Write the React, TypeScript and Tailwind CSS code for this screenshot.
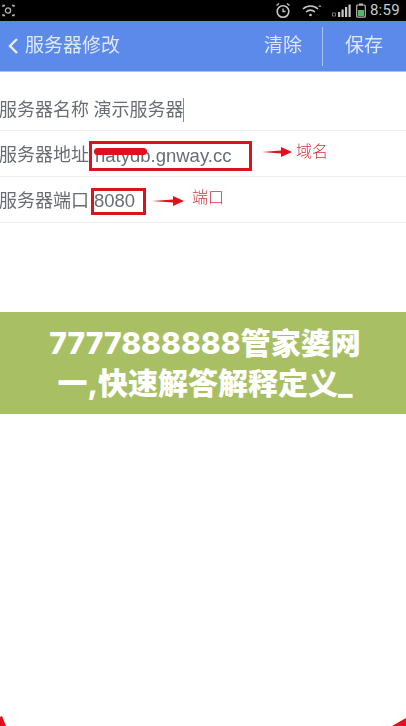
const cjk = "font-['Roboto','Noto_Sans_CJK_SC',sans-serif]";

const RedArrow = ({ width }: { width: number }) => (
  <svg width={width} height="14" viewBox={`0 0 ${width} 14`} className="shrink-0">
    <path d={`M0 7 L${width - 11} 5.5 L${width - 11} 2 L${width} 7 L${width - 11} 12 L${width - 11} 8.5 Z`} fill="#e2101c" />
  </svg>
);

const StatusBar = () => (
  <div className="h-[21px] bg-black flex items-center pl-[2px] pr-[6px] text-[#c9cdd0]">
    <svg width="13" height="13" viewBox="0 0 13 13" fill="none" stroke="#b5b5b5" strokeWidth="1.3">
      <path d="M1 3V1.5H3M10 1.5H12V3M1 10V11.5H3M10 11.5H12V10" />
      <circle cx="6" cy="6.5" r="2.6" />
    </svg>
    <div className="flex-1" />
    <svg width="16" height="17" viewBox="0 0 16 17" fill="none" stroke="#c8c8c8" strokeWidth="1.6">
      <circle cx="8" cy="9.5" r="5.8" />
      <path d="M8 6.5V9.5H10.5M1.5 3.5L4 1.5M14.5 3.5L12 1.5" strokeWidth="1.3" />
    </svg>
    <svg width="20" height="14" viewBox="0 0 20 14" fill="none" stroke="#c8c8c8" strokeWidth="1.5" className="ml-[11px]">
      <path d="M1 5C5 1 12 1 16 5M4 8C7 5.5 10 5.5 13 8" />
      <circle cx="8.5" cy="11" r="1.3" fill="#c8c8c8" stroke="none" />
      <path d="M16 3L18 0.5L19.5 3Z" fill="#5d9e4e" stroke="none" />
    </svg>
    <svg width="20" height="14" viewBox="0 0 20 14" className="ml-[10px]">
      <rect x="0.5" y="9" width="3" height="3" fill="none" stroke="#8a8a8a" strokeWidth="0.8" />
      <rect x="6" y="8" width="2.2" height="5" fill="#c8c8c8" />
      <rect x="9.5" y="5.5" width="2.2" height="7.5" fill="#c8c8c8" />
      <rect x="13" y="3" width="2.2" height="10" fill="#c8c8c8" />
      <rect x="16.5" y="0.5" width="2.2" height="12.5" fill="#c8c8c8" />
    </svg>
    <svg width="10" height="15" viewBox="0 0 10 15" className="ml-[4px]">
      <rect x="3" y="0.5" width="4" height="2" fill="#b8b8b8" />
      <rect x="0.7" y="2" width="8.6" height="12.2" rx="1" fill="none" stroke="#b8b8b8" strokeWidth="1.2" />
      <rect x="2" y="7" width="6" height="6" fill="#56b96a" />
    </svg>
    <span className="ml-[4px] text-[15px] leading-none font-['Roboto',sans-serif] tracking-[0.3px]">8:59</span>
  </div>
);

const Header = () => (
  <div className="h-[51px] bg-[#5b8aeb] border-b border-[#a9c4f3] flex items-center text-[#dfe8fa] text-[19px]">
    <svg width="14" height="18" viewBox="0 0 14 18" fill="none" stroke="#e8effc" strokeWidth="2.4" className="ml-[6px]">
      <path d="M11 2L4 9L11 16" />
    </svg>
    <span className="ml-[5px] whitespace-nowrap">服务器修改</span>
    <div className="flex-1" />
    <span>清除</span>
    <div className="ml-[20px] w-px h-[39px] bg-[#a9c4f3]" />
    <span className="ml-[22px] mr-[23px]">保存</span>
  </div>
);

const App = () => {
  return (
    <div className={`${cjk} relative w-[406px] h-[726px] bg-white overflow-hidden`}>
      <div className="blur-[0.4px]">
        <StatusBar />
        <Header />

        <div className="text-[#686d74] text-[18px] leading-none">
          <div className="h-[59px] border-b border-[#eeeeee] flex items-center pt-[18px]">
            <span className="ml-[-1px] whitespace-nowrap">服务器名称 演示服务器</span>
            <span className="w-px h-[24px] bg-[#8a8a8a]" />
          </div>

          <div className="h-[46px] border-b border-[#eeeeee] flex items-center">
            <span className="ml-[-1px] pt-[3px] whitespace-nowrap">服务器地址</span>
            <div className="relative ml-0 mt-[4px] w-[163px] h-[30px] border-[3px] border-[#d9141e] flex items-center pl-[3px] pt-[1px] text-[18.5px] font-['Liberation_Sans',sans-serif] shrink-0">
              <span>natydb.gnway.cc</span>
              <div className="absolute left-[2px] top-[4px] w-[53px] h-[7px] rounded-full bg-[#e2101c]" />
            </div>
            <div className="ml-[10px] mt-[-3px]">
              <RedArrow width={30} />
            </div>
            <span className="ml-[4px] mt-[-3px] text-[16px] text-[#c9383e] font-light">域名</span>
          </div>

          <div className="h-[46px] border-b border-[#eeeeee] flex items-center">
            <span className="ml-[-1px] pt-[3px] whitespace-nowrap">服务器端口</span>
            <div className="ml-[2px] mt-[3px] w-[55px] h-[27px] border-[3px] border-[#d9141e] flex items-center pl-[0px] pt-[1px] text-[18.5px] font-['Liberation_Sans',sans-serif] shrink-0">
              8080
            </div>
            <div className="ml-[6px] mt-[3px]">
              <RedArrow width={32} />
            </div>
            <span className="ml-[8px] mt-[-3px] text-[16px] text-[#c9383e] font-light">端口</span>
          </div>
        </div>
      </div>

      <div className="mt-[89px] h-[102px] bg-[#a9bf63] flex items-center justify-center text-center text-white font-extrabold text-[30px] leading-[40px] pl-[42px] pr-[38px]">
        <p className="font-['Inter','Noto_Sans_CJK_SC',sans-serif]">7777888888管家婆网一,快速解答解释定义_</p>
      </div>

      {/* bits of the arrow heads showing at the bottom corners */}
      <svg width="6" height="10" viewBox="0 0 6 10" className="absolute left-0 bottom-0">
        <path d="M0 10V1L2 0L6 10Z" fill="#e2101c" />
      </svg>
      <svg width="14" height="8" viewBox="0 0 14 8" className="absolute right-0 bottom-0">
        <path d="M0 8L14 0V8Z" fill="#e2101c" />
      </svg>
    </div>
  );
};

export default App;
